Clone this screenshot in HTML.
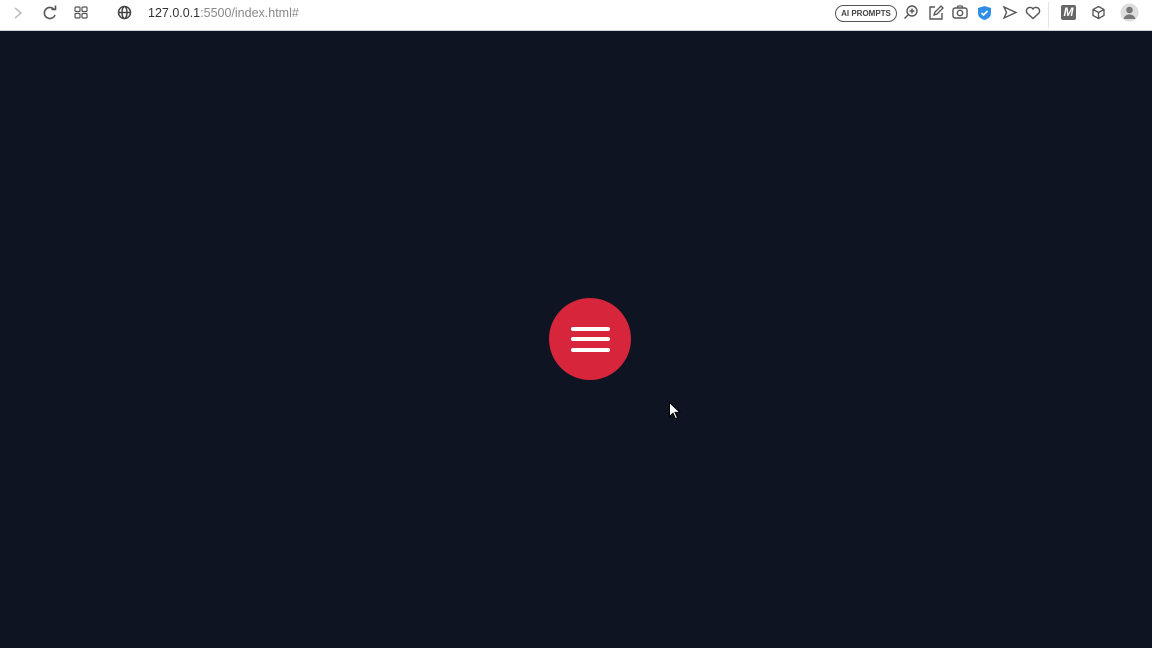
<!DOCTYPE html>
<html><head><meta charset="utf-8"><style>
html,body{margin:0;padding:0;width:1152px;height:648px;overflow:hidden;background:#0f1422;font-family:"Liberation Sans",sans-serif}
.bar{position:absolute;left:0;top:0;width:1152px;height:30px;background:#fff;border-bottom:1px solid #cfd3d8}
.url{position:absolute;left:148px;top:6px;font-size:12.5px;color:#333}
.url span{color:#888}
.pill{position:absolute;left:835px;top:5px;width:60px;height:15px;border:1.3px solid #555;border-radius:9px;font-size:8px;font-weight:bold;color:#444;text-align:center;line-height:15px}
svg{position:absolute}
.btn{position:absolute;left:549px;top:298px;width:82px;height:82px;border-radius:50%;background:#d7263b}
.l{position:absolute;left:22px;width:39px;height:4px;border-radius:2px;background:#fff}
</style></head><body>
<div class="bar">
<svg style="left:12px;top:6px" width="12" height="14"><path d="M3 2l6 5-6 5" fill="none" stroke="#bbb" stroke-width="1.5"/></svg>
<svg style="left:42px;top:5px" width="16" height="16"><path d="M12.5 5A5.5 5.5 0 1 0 13 10" fill="none" stroke="#555" stroke-width="1.6"/><path d="M9.5 4.5h4v-4" fill="none" stroke="#555" stroke-width="1.6"/></svg>
<svg style="left:74px;top:6px" width="14" height="14"><g fill="none" stroke="#555" stroke-width="1.2"><rect x="1" y="1" width="5" height="4.5" rx="1"/><rect x="8" y="1" width="5" height="4.5" rx="1"/><rect x="1" y="7.5" width="5" height="4.5" rx="1"/><rect x="8" y="7.5" width="5" height="4.5" rx="1"/></g></svg>
<svg style="left:117px;top:5px" width="16" height="16"><g fill="none" stroke="#444" stroke-width="1.5"><circle cx="7.5" cy="7.5" r="6"/><ellipse cx="7.5" cy="7.5" rx="2.5" ry="6"/><path d="M1.5 7.5h12"/></g></svg>
<div class="url">127.0.0.1<span>:5500/index.html#</span></div>
<div class="pill">AI PROMPTS</div>
<svg style="left:903px;top:4px" width="16" height="17"><circle cx="9" cy="7" r="5" fill="none" stroke="#555" stroke-width="1.4"/><path d="M9 4.5v5M6.5 7h5M5.5 10.5L1.5 14.5" stroke="#555" stroke-width="1.4"/></svg>
<svg style="left:928px;top:4px" width="16" height="17"><path d="M7 3H2v12h12V9" fill="none" stroke="#555" stroke-width="1.4"/><path d="M6 11l1-3 6-6 2 2-6 6z" fill="none" stroke="#555" stroke-width="1.3"/></svg>
<svg style="left:952px;top:5px" width="16" height="15"><rect x="1" y="3" width="14" height="10" rx="2" fill="none" stroke="#555" stroke-width="1.4"/><circle cx="8" cy="8" r="2.7" fill="none" stroke="#555" stroke-width="1.4"/><path d="M5 3l1-2h4l1 2" fill="none" stroke="#555" stroke-width="1.2"/></svg>
<svg style="left:977px;top:5px" width="15" height="16"><path d="M7.5 1L14 3v5c0 4-3 6-6.5 7C4 14 1 12 1 8V3z" fill="#2f8fe6"/><path d="M4.5 8l2 2 4-4" fill="none" stroke="#fff" stroke-width="1.6"/></svg>
<svg style="left:1002px;top:5px" width="16" height="15"><path d="M2 2l12 5.5L2 13l2.5-5.5z" fill="none" stroke="#555" stroke-width="1.4"/></svg>
<svg style="left:1025px;top:5px" width="16" height="15"><path d="M8 13.5L2 8a3.3 3.3 0 0 1 6-4 3.3 3.3 0 0 1 6 4z" fill="none" stroke="#555" stroke-width="1.4"/></svg>
<div style="position:absolute;left:1048px;top:2px;width:1px;height:26px;background:#e6e6e6"></div>
<div style="position:absolute;left:1061px;top:5px;width:15px;height:15px;background:#666;border-radius:2px;color:#fff;font-size:12px;font-weight:bold;text-align:center;line-height:15px;font-style:italic">M</div>
<svg style="left:1091px;top:5px" width="15" height="15"><path d="M7.5 1.5l5.5 3v6l-5.5 3-5.5-3v-6zM2 4.5l5.5 3 5.5-3M7.5 7.5v6" fill="none" stroke="#555" stroke-width="1.3"/></svg>
<svg style="left:1120px;top:3px" width="19" height="19"><circle cx="9.5" cy="9.5" r="9" fill="#ddd"/><circle cx="9.5" cy="7" r="3.3" fill="#777"/><path d="M3.5 16c1-3.5 3.5-4.5 6-4.5s5 1 6 4.5z" fill="#777"/></svg>
</div>
<div class="btn"><div class="l" style="top:29px"></div><div class="l" style="top:39px"></div><div class="l" style="top:50px"></div></div>
<svg style="left:668px;top:401px" width="14" height="20"><path d="M1.5 1.5v14l3.5-3.3 2.5 5.5 2-1-2.5-5.3h4.8z" fill="#fff" stroke="#000" stroke-width="1"/></svg>
</body></html>
